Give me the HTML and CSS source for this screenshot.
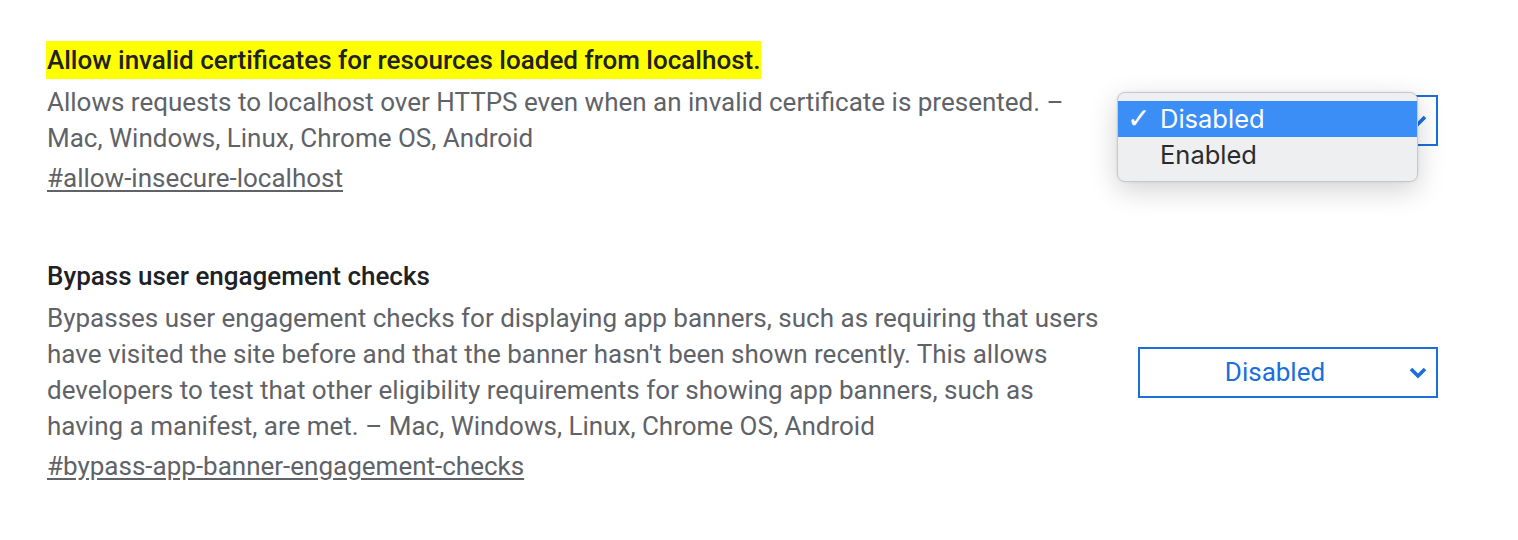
FILE: index.html
```html
<!DOCTYPE html>
<html>
<head>
<meta charset="utf-8">
<link rel="stylesheet" href="styles.css">
</head>
<body>
<div class="page">
  <div class="experiment">
    <div class="info">
      <h3 class="name"><span class="highlight">Allow invalid certificates for resources loaded from localhost.</span></h3>
      <p class="desc">Allows requests to localhost over HTTPS even when an invalid certificate is presented. – Mac, Windows, Linux, Chrome OS, Android</p>
      <a class="perma" href="#allow-insecure-localhost">#allow-insecure-localhost</a>
    </div>
    <div class="control">
      <div class="select">
        <span class="value">Disabled</span>
        <svg class="chev" width="18" height="12" viewBox="0 0 18 12"><path d="M2 2 L9 9 L16 2" fill="none" stroke="#1a6fdc" stroke-width="3.6"/></svg>
      </div>
      <div class="popup">
        <div class="opt selected"><span class="tick">✓</span>Disabled</div>
        <div class="opt"><span class="tick"></span>Enabled</div>
      </div>
    </div>
  </div>
  <div class="experiment">
    <div class="info">
      <h3 class="name"><span class="plain">Bypass user engagement checks</span></h3>
      <p class="desc">Bypasses user engagement checks for displaying app banners, such as requiring that users have visited the site before and that the banner hasn't been shown recently. This allows developers to test that other eligibility requirements for showing app banners, such as having a manifest, are met. – Mac, Windows, Linux, Chrome OS, Android</p>
      <a class="perma" href="#bypass-app-banner-engagement-checks">#bypass-app-banner-engagement-checks</a>
    </div>
    <div class="control">
      <div class="select">
        <span class="value">Disabled</span>
        <svg class="chev" width="18" height="12" viewBox="0 0 18 12"><path d="M2 2 L9 9 L16 2" fill="none" stroke="#1a6fdc" stroke-width="3.6"/></svg>
      </div>
    </div>
  </div>
</div>
</body>
</html>
```

FILE: styles.css
```css
html, body {
  margin: 0;
  padding: 0;
  background: #ffffff;
}
body {
  font-family: Roboto, "Liberation Sans", sans-serif;
}
.page {
  padding: 41px 80px 0 47px;
  display: flex;
  flex-direction: column;
  gap: 61px;
}
.experiment {
  display: flex;
  align-items: center;
  justify-content: space-between;
}
.info {
  width: 1058px;
  display: flex;
  flex-direction: column;
  align-items: flex-start;
}
.name {
  margin: 0;
  font-size: 26px;
  font-weight: 500;
  color: #202124;
  line-height: 38px;
}
.highlight {
  display: inline-block;
  background: #ffff00;
  padding: 0 1px 0 1px;
  margin-left: -1px;
}
.desc {
  margin: 5px 0 0 0;
  font-size: 26px;
  line-height: 36px;
  color: #5f6368;
}
.perma {
  margin-top: 4px;
  font-size: 26px;
  line-height: 36px;
  color: #5f6368;
  text-decoration: underline;
  text-underline-offset: 3px;
}
.control {
  position: relative;
  width: 300px;
  padding-top: 3px;
}
.select {
  box-sizing: border-box;
  height: 51px;
  border: 2px solid #1a6fdc;
  padding-right: 26px;
  display: flex;
  align-items: center;
  justify-content: center;
  position: relative;
  color: #1a6fdc;
  font-size: 26px;
}
.chev {
  position: absolute;
  right: 9px;
  top: 18px;
}
.popup {
  position: absolute;
  left: -21px;
  top: 0;
  width: 301px;
  box-sizing: border-box;
  padding: 8px 0 8px;
  background: #eeeff1;
  border: 1px solid #c8c8ca;
  border-radius: 8px;
  box-shadow: 0 8px 28px rgba(0,0,0,0.18), 0 0 3px rgba(0,0,0,0.08);
  font-family: Inter, "Noto Sans", sans-serif;
  font-size: 25.5px;
  color: #2b2b2b;
}
.opt {
  height: 36px;
  display: flex;
  align-items: center;
}
.opt.selected {
  background: #3a8ef6;
  color: #ffffff;
}
.tick {
  width: 42px;
  padding-left: 9px;
  box-sizing: border-box;
  font-size: 28px;
  font-family: "DejaVu Sans", sans-serif;
  font-weight: 300;
}
```
